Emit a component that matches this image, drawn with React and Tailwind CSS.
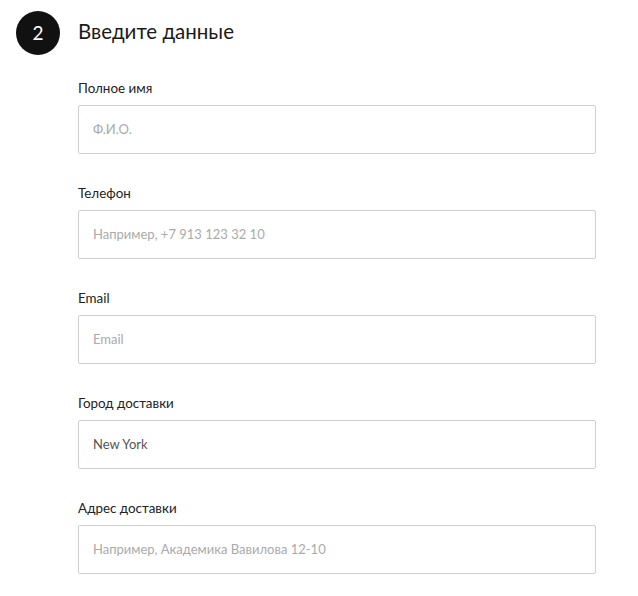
import React from 'react';

const fields = [
  { label: 'Полное имя', placeholder: 'Ф.И.О.' },
  { label: 'Телефон', placeholder: 'Например, +7 913 123 32 10' },
  { label: 'Email', placeholder: 'Email' },
  { label: 'Город доставки', placeholder: 'Город', value: 'New York' },
  { label: 'Адрес доставки', placeholder: 'Например, Академика Вавилова 12-10' },
];

const App = () => {
  return (
    <div className="min-h-[596px] bg-white pl-4 pt-[11px] text-[#1a1a1a]" style={{ fontFamily: 'Lato, "Noto Sans", sans-serif' }}>
      <div className="flex items-center">
        <div className="flex h-11 w-11 items-center justify-center rounded-full bg-[#111] text-[19px] text-white">
          2
        </div>
        <h2 className="mb-[3px] ml-[18px] text-[20.5px] font-normal leading-none">Введите данные</h2>
      </div>
      <div className="ml-[62px] mt-[23px] w-[518px]">
        {fields.map((f) => (
          <div key={f.label} className="mb-[29px]">
            <label className="block text-[13.4px] leading-5 text-[#222]">{f.label}</label>
            <input
              className="mt-[7px] block h-[49px] w-full rounded-[2px] border border-[#cfcfcf] px-[14px] pb-[2px] text-[13px] text-[#555] outline-none placeholder:text-[#aaa]"
              placeholder={f.placeholder}
              defaultValue={f.value}
            />
          </div>
        ))}
      </div>
    </div>
  );
};

export default App;
